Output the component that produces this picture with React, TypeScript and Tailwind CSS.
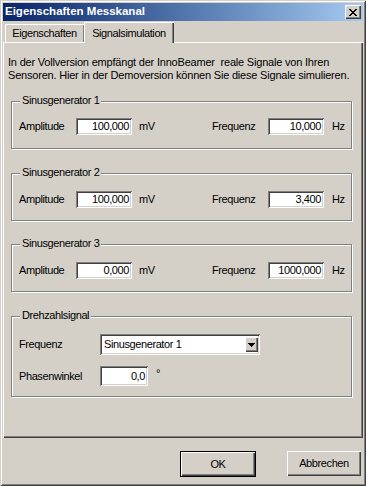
import React from "react";

const face = "bg-[#d4d0c8]";

function Sunken({ w, h, value, className = "" }: { w: string; h: string; value: string; className?: string }) {
  return (
    <div
      className={`${w} ${h} bg-white flex items-center justify-end pr-[3px] shadow-[inset_1px_1px_0_#808080,inset_-1px_-1px_0_#ffffff,inset_2px_2px_0_#404040,inset_-2px_-2px_0_#d4d0c8] ${className}`}
    >
      {value}
    </div>
  );
}

function Group({ title, h, children }: { title: string; h: string; children: React.ReactNode }) {
  return (
    <div className={`relative ${h} w-[341px] border border-[#808080] shadow-[1px_1px_0_#ffffff,inset_1px_1px_0_#ffffff]`}>
      <span className={`absolute left-[8px] top-[-8px] h-[13px] leading-[13px] px-[2px] ${face}`}>{title}</span>
      {children}
    </div>
  );
}

function SinusRow({ amp, freq }: { amp: string; freq: string }) {
  return (
    <div className="flex items-center h-[17px] pl-[7px] pt-0">
      <span className="w-[57px]">Amplitude</span>
      <Sunken w="w-[56px]" h="h-[17px]" value={amp} />
      <span className="ml-[7px] w-[73px]">mV</span>
      <span className="w-[56px]">Frequenz</span>
      <Sunken w="w-[56px]" h="h-[17px]" value={freq} />
      <span className="ml-[8px]">Hz</span>
    </div>
  );
}

function Button({ label, def }: { label: string; def?: boolean }) {
  if (def) {
    return (
      <div className="w-[76px] h-[26px] border border-black">
        <div className="w-full h-full flex items-center justify-center shadow-[inset_1px_1px_0_#ffffff,inset_-1px_-1px_0_#404040,inset_-2px_-2px_0_#808080]">
          {label}
        </div>
      </div>
    );
  }
  return (
    <div className="w-[74px] h-[25px] flex items-center justify-center shadow-[inset_1px_1px_0_#ffffff,inset_-1px_-1px_0_#404040,inset_-2px_-2px_0_#808080]">
      {label}
    </div>
  );
}

export default function App() {
  return (
    <div
      className={`w-[366px] h-[486px] ${face} p-[3px] flex flex-col text-black text-[11px] tracking-[-0.4px] font-['Liberation_Sans',Arial,sans-serif] shadow-[inset_1px_1px_0_#d4d0c8,inset_-1px_-1px_0_#404040,inset_2px_2px_0_#ffffff,inset_-2px_-2px_0_#808080]`}
    >
      {/* Title bar */}
      <div className="h-[18px] w-[360px] flex items-center justify-between pl-[2px] pr-[2px] bg-gradient-to-r from-[#0a246a] to-[#a6caf0]">
        <span className="text-white font-bold text-[11.5px] tracking-normal">Eigenschaften Messkanal</span>
        <div className={`w-[16px] h-[14px] ${face} flex items-center justify-center shadow-[inset_1px_1px_0_#ffffff,inset_-1px_-1px_0_#404040,inset_-2px_-2px_0_#808080]`}>
          <svg width="8" height="7" viewBox="0 0 8 7" shapeRendering="crispEdges">
            <path d="M0 0h2v1h-2zM6 0h2v1h-2zM1 1h2v1h-2zM5 1h2v1h-2zM2 2h4v1h-4zM3 3h2v1h-2zM2 4h4v1h-4zM1 5h2v1h-2zM5 5h2v1h-2zM0 6h2v1h-2zM6 6h2v1h-2z" fill="#000" />
          </svg>
        </div>
      </div>

      {/* Tabs */}
      <div className="h-[21px] flex items-end pl-[2px]">
        <div className="w-[79px] h-[18px] flex items-center justify-center shadow-[inset_1px_1px_0_#ffffff,inset_-1px_0_0_#808080]">
          Eigenschaften
        </div>
        <div className={`relative z-10 w-[90px] h-[21px] -mb-[1px] ${face} flex items-start justify-center pt-[3px] shadow-[inset_1px_1px_0_#ffffff,inset_-1px_0_0_#404040,inset_-2px_0_0_#808080]`}>
          Signalsimulation
        </div>
      </div>

      {/* Panel */}
      <div className="w-[360px] h-[396px] pl-[8px] pt-[14px] shadow-[inset_1px_1px_0_#ffffff,inset_-1px_-1px_0_#404040,inset_-2px_-2px_0_#808080]">
        <div className="leading-[13px] -ml-[3px] tracking-[-0.2px]">
          <div>In der Vollversion empfängt der InnoBeamer&nbsp; reale Signale von Ihren</div>
          <div>Sensoren. Hier in der Demoversion können Sie diese Signale simulieren.</div>
        </div>

        <div className="mt-[19px]">
          <Group title="Sinusgenerator 1" h="h-[48px]">
            <div className="pt-[16px]">
              <SinusRow amp="100,000" freq="10,000" />
            </div>
          </Group>
        </div>

        <div className="mt-[24px]">
          <Group title="Sinusgenerator 2" h="h-[48px]">
            <div className="pt-[17px]">
              <SinusRow amp="100,000" freq="3,400" />
            </div>
          </Group>
        </div>

        <div className="mt-[23px]">
          <Group title="Sinusgenerator 3" h="h-[48px]">
            <div className="pt-[17px]">
              <SinusRow amp="0,000" freq="1000,000" />
            </div>
          </Group>
        </div>

        <div className="mt-[24px]">
          <Group title="Drehzahlsignal" h="h-[81px]">
            <div className="pt-[17px] pl-[7px] flex flex-col">
              <div className="flex items-center h-[21px]">
                <span className="w-[81px]">Frequenz</span>
                <div className="w-[160px] h-[21px] bg-white flex items-center justify-between pl-[4px] pr-[2px] shadow-[inset_1px_1px_0_#808080,inset_-1px_-1px_0_#ffffff,inset_2px_2px_0_#404040,inset_-2px_-2px_0_#d4d0c8]">
                  <span>Sinusgenerator 1</span>
                  <div className={`w-[13px] h-[15px] ${face} flex items-center justify-center shadow-[inset_1px_1px_0_#ffffff,inset_-1px_-1px_0_#404040,inset_-2px_-2px_0_#808080]`}>
                    <svg width="7" height="4" viewBox="0 0 7 4" shapeRendering="crispEdges">
                      <path d="M0 0h7v1h-7zM1 1h5v1h-5zM2 2h3v1h-3zM3 3h1v1h-1z" fill="#000" />
                    </svg>
                  </div>
                </div>
              </div>
              <div className="flex items-center h-[20px] mt-[11px]">
                <span className="w-[81px]">Phasenwinkel</span>
                <Sunken w="w-[48px]" h="h-[20px]" value="0,0" />
                <span className="ml-[8px] self-start -mt-[1px]">°</span>
              </div>
            </div>
          </Group>
        </div>
      </div>

      {/* Buttons */}
      <div className="flex items-start mt-[13px] pl-[177px]">
        <Button label="OK" def />
        <div className="ml-[31px]">
          <Button label="Abbrechen" />
        </div>
      </div>
    </div>
  );
}
